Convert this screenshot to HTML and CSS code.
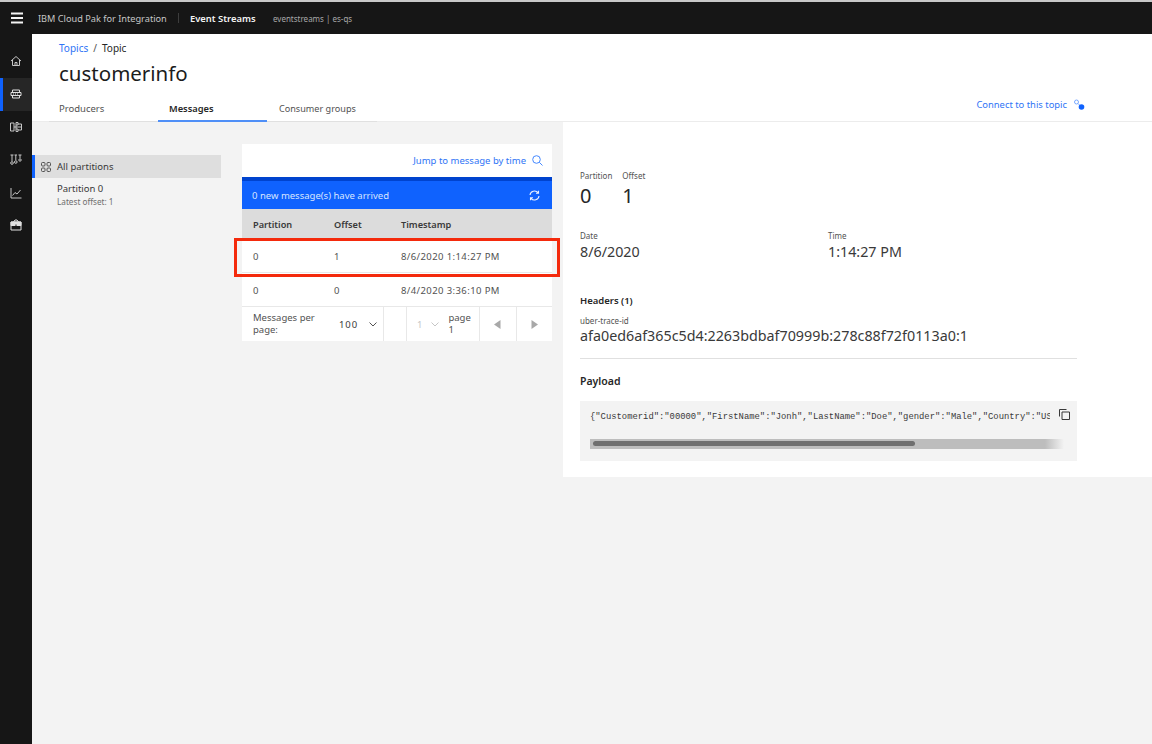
FILE: index.html
```html
<!DOCTYPE html>
<html lang="en">
<head>
<meta charset="utf-8">
<title>customerinfo</title>
<link rel="stylesheet" href="styles.css">
</head>
<body>
<header class="topbar">
  <svg class="menu" width="14" height="12" viewBox="0 0 14 12"><path d="M1 1.500h12M1 6h12M1 10.500h12" stroke="#f4f4f4" stroke-width="1.800"/></svg>
  <span class="brand">IBM Cloud Pak for Integration</span>
  <span class="sep"></span>
  <span class="product">Event Streams</span>
  <span class="instance">eventstreams | es-qs</span>
</header>
<div class="shell">
  <nav class="sidenav">
    <a class="navitem"><svg width="12" height="12" viewBox="0 0 12 12" fill="none" stroke="#c6c6c6"><path d="M1 6 6 1.500 11 6M2.500 5v5.500h7V5M5 10.500V7.500h2v3"/></svg></a>
    <a class="navitem active"><svg width="12" height="12" viewBox="0 0 12 12" fill="none" stroke="#e0e0e0"><path d="M2.500 2h7v2.500h-7zM2.500 7.500h7V10h-7zM1 4.500h10v3H1z"/><path d="M3 6h6" stroke-dasharray="1 1"/></svg></a>
    <a class="navitem"><svg width="12" height="12" viewBox="0 0 12 12" fill="none" stroke="#c6c6c6"><path d="M.5 2h3.500v8H.5zM6 1.500h2v2.500H6zM6 8h2v2.500H6zM4 6h7.500M8 3h3.500v6H8M6 6v-2M6 6v2"/></svg></a>
    <a class="navitem"><svg width="12" height="12" viewBox="0 0 12 12" fill="none" stroke="#c6c6c6"><path d="M.5 1h3M2 1v6M.7 9a1.300 1.300 0 1 0 2.600 0 1.300 1.300 0 1 0-2.600 0zM4.500 1H7M5.800 1v5M4.500 8a1.300 1.300 0 1 0 2.600 0 1.300 1.300 0 1 0-2.600 0zM8.500 1h3M10 1v3M8.800 6a1.200 1.200 0 1 0 2.400 0 1.200 1.200 0 1 0-2.400 0z"/></svg></a>
    <a class="navitem"><svg width="12" height="12" viewBox="0 0 12 12" fill="none" stroke="#c6c6c6"><path d="M1 1v10h10.500M2.500 8.500 5 5.500l2 1.500 3.500-4"/></svg></a>
    <a class="navitem"><svg width="12" height="12" viewBox="0 0 12 12" fill="none" stroke="#e0e0e0"><path d="M3.500 3 5 1h2l1.500 2M1 3h10v8H1z"/><path d="M1 3h10v3.500H1z" fill="#e0e0e0"/><path d="M6 5.500v2.500" stroke="#161616"/></svg></a>
  </nav>
  <main class="content">
    <section class="pagehead">
      <div class="crumbs"><a class="link">Topics</a><span class="slash">/</span><span>Topic</span></div>
      <h1 class="title">customerinfo</h1>
      <div class="tabrow">
        <div class="tabs">
          <span class="tab first">Producers</span>
          <span class="tab selected">Messages</span>
          <span class="tab last">Consumer groups</span>
        </div>
        <a class="connect link">Connect to this topic
          <svg width="12" height="12" viewBox="0 0 12 12"><circle cx="3.500" cy="3" r="2" fill="none" stroke="#78a9ff"/><path d="M5 4.500 7 6.500" stroke="#78a9ff"/><circle cx="8.500" cy="8" r="2.800" fill="#0f62fe"/></svg>
        </a>
      </div>
    </section>
    <section class="workspace">
      <aside class="partitions">
        <div class="partition all">
          <svg width="10" height="10" viewBox="0 0 10 10" fill="none" stroke="#525252"><rect x=".5" y=".5" width="3.500" height="3.500" rx="1"/><rect x="6" y=".5" width="3.500" height="3.500" rx="1"/><rect x=".5" y="6" width="3.500" height="3.500" rx="1"/><rect x="6" y="6" width="3.500" height="3.500" rx="1"/></svg>
          All partitions
        </div>
        <div class="partition-zero">
          <div class="pname">Partition 0</div>
          <div class="poffset">Latest offset: 1</div>
        </div>
      </aside>
      <div class="messages">
        <div class="jump"><a class="link">Jump to message by time</a>
          <svg width="11" height="11" viewBox="0 0 11 11" fill="none" stroke="#4589ff"><circle cx="4.500" cy="4.500" r="3.800"/><path d="M7.300 7.300 10.500 10.500"/></svg>
        </div>
        <div class="banner">
          <span>0 new message(s) have arrived</span>
          <svg width="11" height="11" viewBox="0 0 11 11" fill="none" stroke="#e8f0ff" stroke-width="1.100"><path d="M1 5A4.500 4.500 0 0 1 9 2.700M10 6A4.500 4.500 0 0 1 2 8.300M9.500.8v2.400H7M1.500 10.200V7.800H4"/></svg>
        </div>
        <div class="row head"><span>Partition</span><span>Offset</span><span>Timestamp</span></div>
        <div class="row body"><span>0</span><span>1</span><span>8/6/2020 1:14:27 PM</span></div>
        <div class="row body"><span>0</span><span>0</span><span>8/4/2020 3:36:10 PM</span></div>
        <div class="pager">
          <div class="perpage"><span class="pplabel">Messages per page:</span><span class="ppvalue">100</span>
            <svg width="8" height="5" viewBox="0 0 8 5" fill="none" stroke="#525252"><path d="M.5.500 4 4 7.500.500"/></svg></div>
          <div class="blank"></div>
          <div class="pageno"><span class="faint">1</span>
            <svg width="8" height="5" viewBox="0 0 8 5" fill="none" stroke="#c6c6c6"><path d="M.5.500 4 4 7.500.500"/></svg>
            <span class="pagetext">page 1</span></div>
          <div class="arrow"><svg width="7" height="9" viewBox="0 0 7 9"><path d="M6.500 0v9L0 4.500z" fill="#a8a8a8"/></svg></div>
          <div class="arrow"><svg width="7" height="9" viewBox="0 0 7 9"><path d="M.5 0v9L7 4.500z" fill="#a8a8a8"/></svg></div>
        </div>
        <div class="highlight"></div>
      </div>
      <article class="detail">
        <div class="pairs">
          <div><div class="label">Partition</div><div class="big">0</div></div>
          <div><div class="label">Offset</div><div class="big">1</div></div>
        </div>
        <div class="datetime">
          <div><div class="label">Date</div><div class="mid">8/6/2020</div></div>
          <div><div class="label">Time</div><div class="mid">1:14:27 PM</div></div>
        </div>
        <h2 class="headers">Headers (1)</h2>
        <div class="label">uber-trace-id</div>
        <div class="mid trace">afa0ed6af365c5d4:2263bdbaf70999b:278c88f72f0113a0:1</div>
        <h2 class="payload">Payload</h2>
        <div class="code">
          <div class="codeline">
            <code>{"Customerid":"00000","FirstName":"Jonh","LastName":"Doe","gender":"Male","Country":"USA"}</code>
            <svg width="11" height="11" viewBox="0 0 11 11" fill="none" stroke="#393939"><path d="M3 3h7.500v7.500H3zM.5 7.500V.5H7.500" /></svg>
          </div>
          <div class="track"><div class="thumb"></div></div>
        </div>
      </article>
    </section>
  </main>
</div>
</body>
</html>
```
FILE: styles.css
```css
* { box-sizing: border-box; }
html, body { height: 100%; }
body {
  margin: 0;
  height: 744px;
  overflow: hidden;
  background: #f3f3f3;
  color: #262626;
  font-family: "Noto Sans", "Open Sans", sans-serif;
  font-size: 10px;
}
.link { color: #2f74f6; }

.topbar {
  height: 34px;
  border-top: 2px solid #c8c8c8;
  background: #161616;
  display: flex;
  align-items: center;
  color: #c6c6c6;
}
.menu { margin-left: 10px; margin-right: 14px; }
.brand { font-size: 9.200px; width: 130px; white-space: nowrap; }
.sep { width: 1px; height: 10px; background: #3d3d3d; margin: 0 11px 0 10px; }
.product { font-size: 9.400px; font-weight: 600; color: #f4f4f4; width: 83px; white-space: nowrap; }
.instance { font-size: 8px; color: #a8a8a8; white-space: nowrap; }

.shell { display: flex; height: 710px; }
.sidenav { width: 32px; flex: none; background: #161616; padding-top: 11px; display: flex; flex-direction: column; }
.navitem { height: 32.800px; display: flex; align-items: center; justify-content: center; }
.navitem.active { background: #262626; box-shadow: inset 3px 0 0 #0f62fe; }

.content { flex: 1; min-width: 0; display: flex; flex-direction: column; }
.pagehead { height: 88px; background: #fff; border-bottom: 1px solid #ececec; padding: 7px 67px 0 27px; }
.crumbs { font-size: 10px; line-height: 14px; display: flex; gap: 5px; }
.slash { color: #525252; }
.title { margin: 4px 0 0; font-size: 20.500px; line-height: 28px; font-weight: 400; color: #1c1c1c; }
.tabrow { display: flex; justify-content: space-between; align-items: flex-start; margin-top: 13px; margin-left: -10px; }
.tabs { display: flex; height: 22px; }
.tab { display: block; color: #525252; font-size: 9.500px; line-height: 14px; padding-top: 2px; border-bottom: 1px solid #e0e0e0; padding-left: 10px; white-space: nowrap; }
.first { width: 109px; }
.selected { width: 109px; color: #262626; font-size: 9.300px; font-weight: 600; border-bottom: 2px solid #4f8ff7; padding-left: 11px; }
.last { width: 110px; padding-left: 12px; font-size: 9.100px; }
.connect { font-size: 9.400px; line-height: 14px; display: flex; align-items: center; gap: 6px; margin-top: -2px; }

.workspace { flex: 1; min-height: 0; display: flex; align-items: flex-start; }
.partitions { width: 189px; margin-top: 33px; margin-right: 21px; flex: none; }
.partition.all { height: 23px; background: #dedede; box-shadow: inset 3px 0 0 #0f62fe; display: flex; align-items: center; gap: 6px; padding-left: 9px; font-size: 9.500px; color: #393939; }
.partition-zero { padding: 4px 0 0 25px; }
.pname { font-size: 9.500px; line-height: 13px; color: #393939; }
.poffset { font-size: 8.200px; line-height: 13px; color: #6f6f6f; }

.messages { width: 310px; margin-top: 22px; margin-right: 11px; flex: none; position: relative; background: #fff; }
.jump { height: 33px; display: flex; align-items: center; justify-content: flex-end; gap: 6px; padding-right: 9px; font-size: 9.500px; }
.banner { height: 32px; background: #0f62fe; border-top: 4px solid #0043ce; color: #d8e5ff; font-size: 9.500px; display: flex; align-items: center; justify-content: space-between; padding: 0 12px 0 10px; }
.row { display: grid; grid-template-columns: 81px 67px 1fr; padding-left: 11px; align-items: center; }
.row.head { height: 30px; background: #dcdcdc; font-weight: 600; font-size: 9.200px; color: #393939; }
.row.body { height: 34px; padding-top: 1px; font-size: 9.500px; letter-spacing: .4px; color: #525252; border-bottom: 1px solid #e8e8e8; }

.pager { height: 34px; display: flex; font-size: 9.500px; color: #525252; }
.perpage { width: 142px; display: flex; align-items: center; padding-left: 11px; border-right: 1px solid #e8e8e8; }
.pplabel { width: 86px; line-height: 12px; }
.ppvalue { color: #393939; width: 30px; letter-spacing: .9px; }
.blank { width: 23px; border-right: 1px solid #e8e8e8; }
.pageno { width: 73px; display: flex; align-items: center; padding-left: 10px; gap: 9px; border-right: 1px solid #e8e8e8; }
.faint { color: #c6c6c6; }
.pagetext { width: 28px; line-height: 12px; }
.arrow { flex: 1; display: flex; align-items: center; justify-content: center; }
.arrow + .arrow { border-left: 1px solid #e8e8e8; }

.highlight { position: absolute; left: -8px; top: 94px; width: 326px; height: 39px; border: 3px solid #f42a0c; }

.detail { flex: 1; min-width: 0; height: 355px; background: #fff; padding: 48px 75px 0 17px; }
.pairs { display: flex; gap: 10px; }
.label { font-size: 8px; line-height: 12px; color: #525252; }
.big { font-size: 20px; line-height: 28px; color: #262626; }
.datetime { display: grid; grid-template-columns: 248px 1fr; margin-top: 20px; }
.mid { font-size: 14.300px; line-height: 19px; color: #393939; }
.headers, .payload { margin: 0; font-size: 9.500px; font-weight: 600; color: #262626; }
.headers { margin-top: 33px; line-height: 14px; margin-bottom: 7px; }
.trace { line-height: 18px; padding-bottom: 13px; border-bottom: 1px solid #e0e0e0; white-space: nowrap; }
.payload { font-size: 10.500px; line-height: 14px; margin-top: 15px; }
.code { height: 60px; margin-top: 13px; background: #f3f3f3; padding: 8px 7px 0 10px; }
.codeline { display: flex; justify-content: space-between; gap: 9px; height: 30px; }
.codeline code { flex: 1; min-width: 0; overflow: hidden; white-space: nowrap; font-family: "Liberation Mono", monospace; font-size: 8.850px; line-height: 15px; color: #393939; padding-top: 1px; }
.track { height: 10px; margin-right: 6px; background: linear-gradient(to right, #bdbdbd 96%, #f3f3f3); padding: 2px 0 0 3px; }
.thumb { width: 322px; height: 5px; background: #6f6f6f; border-radius: 3px; }
```
